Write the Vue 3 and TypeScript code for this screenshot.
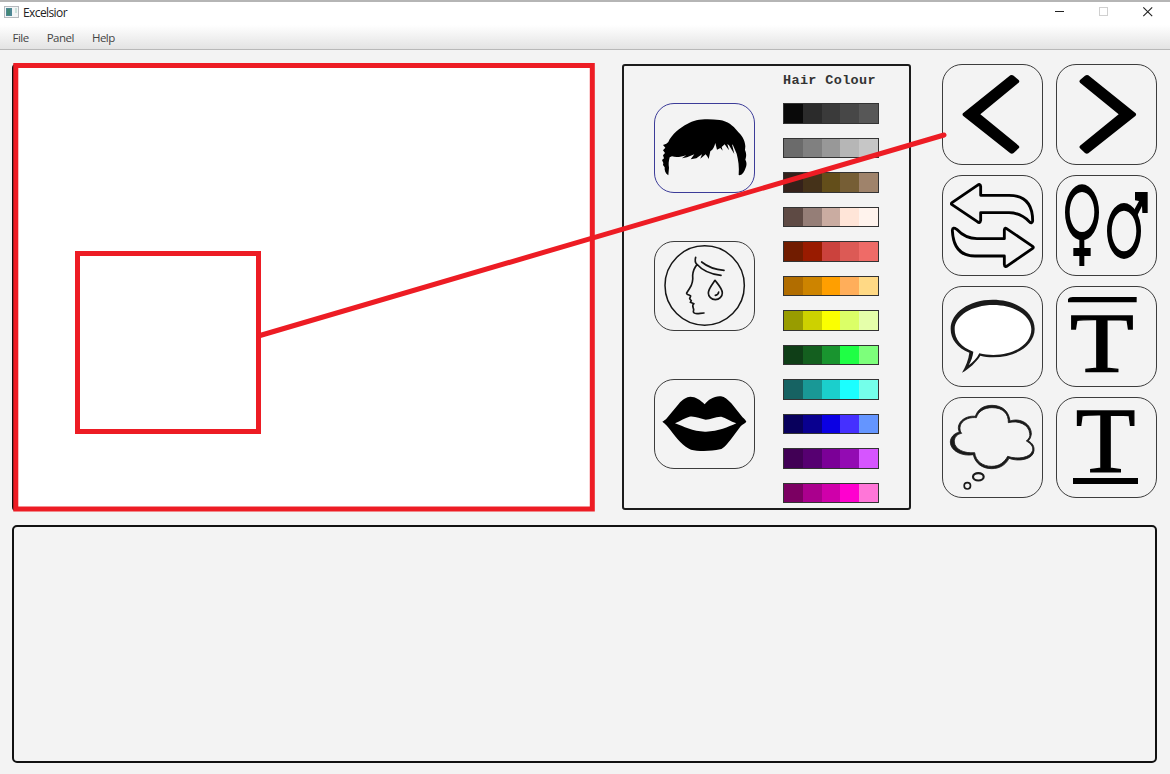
<script setup lang="ts">
interface Tool { id: string; box: string }

const menus: string[] = ['File', 'Panel', 'Help']

const features: Tool[] = [
  { id: 'hair', box: '27 24 303 270' },
  { id: 'skin', box: '27 18 303 270' },
  { id: 'lips', box: '27 21 303 270' },
]

const tools: Tool[] = [
  { id: 'prev', box: '21 27 303 303' },
  { id: 'next', box: '363 27 303 303' },
  { id: 'swap', box: '21 15 303 303' },
  { id: 'gender', box: '363 15 303 303' },
  { id: 'speech', box: '21 18 303 303' },
  { id: 'top-text', box: '363 18 303 303' },
  { id: 'thought', box: '21 21 303 303' },
  { id: 'bottom-text', box: '363 21 303 303' },
]

const palette: string[][] = [
  ['#090909', '#2b2b2b', '#3a3a3a', '#474747', '#575757'],
  ['#6b6b6b', '#808080', '#989898', '#b6b6b6', '#c6c6c6'],
  ['#35211a', '#453219', '#634e1a', '#765e35', '#9f836b'],
  ['#5e4a44', '#957e77', '#caaca1', '#ffe5d8', '#fff3ed'],
  ['#711c00', '#991b00', '#cb423d', '#dc5a55', '#ef6b67'],
  ['#b16d00', '#cd8400', '#ff9f00', '#ffae5a', '#ffd985'],
  ['#989c00', '#cdd100', '#fbff00', '#dbff67', '#e5ffaa'],
  ['#0f3e17', '#145f1f', '#19942f', '#1fff45', '#7dff7b'],
  ['#166262', '#199896', '#1bcfcc', '#1bffff', '#74ffea'],
  ['#08005c', '#09008f', '#0b00e3', '#4530ff', '#6495ff'],
  ['#410055', '#560071', '#7b0097', '#930bb3', '#d655ff'],
  ['#7b0062', '#aa008d', '#cf00aa', '#ff00cf', '#ff76d8'],
]
</script>

<template>
  <div class="window">
    <header class="titlebar">
      <svg class="app-icon" viewBox="0 0 15 12">
        <rect x=".5" y=".5" width="14" height="11" fill="#f3f5f6" stroke="#b5b9bd" />
        <rect x="2" y="2" width="6" height="8" fill="#4d8794" />
        <rect x="3" y="3" width="3" height="6" fill="#438875" />
        <rect x="11" y="2" width="2" height="5" fill="#cbe2dc" />
      </svg>
      <span class="title">Excelsior</span>
      <div class="controls">
        <svg viewBox="0 0 12 12"><path d="M1 5.500H10" stroke="#222" /></svg>
        <svg viewBox="0 0 12 12"><rect x="1.5" y="1.5" width="8" height="8" fill="none" stroke="#d0d0d0" /></svg>
        <svg viewBox="0 0 12 12"><path d="M1.3 1.3 10.2 10.2M10.2 1.3 1.3 10.2" stroke="#222" stroke-width="1.1" /></svg>
      </div>
    </header>
    <nav class="menubar">
      <span v-for="menu in menus" :key="menu">{{ menu }}</span>
    </nav>

    <main class="workspace">
      <div class="upper">
        <section class="canvas"></section>

        <section class="character">
          <div class="features">
            <button v-for="item in features" :key="item.id" class="tile" :class="{ selected: item.id === 'hair' }">
              <svg :viewBox="item.box">
                <path v-if="item.id === 'hair'" d="M70 241C61 236 58 226 59 217L54 210 55 204 51 195 57 190 54 181 60 174 54 166 61 158 54 150 64 146 70 141C79 119 105 97 128 86C149 72 186 70 224 75C248 79 264 91 277 108C290 121 300 134 301 154L300 165C305 178 304 184 301 194C307 204 304 214 302 218C298 230 293 239 284 241L281 240C283 216 280 195 275 176L264 151 261 148 268 177 252 151 247 147 252 166 239 148 230 156 233 167 226 159 216 164 211 144C208 154 205 164 196 169L191 192C188 185 185 183 182 178L166 191 171 178 154 190 137 193 148 178 126 187 111 190 124 180C107 187 92 188 81 184L74 187C71 199 70 207 72 218Z" />
                <g v-else-if="item.id === 'skin'" fill="none" stroke="#161616" stroke-width="5" stroke-linecap="round" stroke-linejoin="round">
                  <circle cx="179" cy="151.500" r="119" stroke-width="4.500" />
                  <path d="M152 67C149 77 150 83 156 89C148 98 144 109 143 121C145 140 140 151 134 160L125 174Q124 178 132 180L137 183 134 191 139 197 136 202 147 206C139 211 145 216 146 224C143 233 147 236 156 236C164 236 168 234 177 234M155 87C174 109 198 118 228 121M170 81C192 99 211 104 237 106M210 136C202 148 190 162 190 174A21 20 0 0 0 232 174C232 161 220 149 210 136ZM221 171Q220 180 211 181" />
                </g>
                <path v-else fill-rule="evenodd" d="M52 149C57 146 62 143 66 138L101 96C112 81 125 75 136 74C151 74 167 84 179 97C190 83 208 71 228 73C239 74 248 83 259 94L289 131C293 137 301 141 304 149C300 154 292 157 287 163L259 200C246 216 237 229 225 232C198 238 158 238 138 233C115 224 94 198 76 174C69 164 61 155 52 149ZM90 154C107 147 120 137 133 134C149 131 165 140 182 143C197 142 212 133 229 134C242 137 257 149 274 154C249 165 221 178 183 179C145 180 116 163 90 154Z" />
              </svg>
            </button>
          </div>
          <div class="colours">
            <h2>Hair Colour</h2>
            <div class="rows">
              <div v-for="(row, i) in palette" :key="i" class="swatches">
                <i v-for="colour in row" :key="colour" :style="{ background: colour }"></i>
              </div>
            </div>
          </div>
        </section>

        <section class="tools">
          <button v-for="tool in tools" :key="tool.id" class="tile">
            <svg :viewBox="tool.box">
              <path v-if="tool.id === 'prev'" d="M84 175 226 61Q231 59 236 62L251 75Q255 79 251 83L136 178 251 272Q255 276 251 280L236 294Q231 298 226 295L84 182Q81 178 84 175Z" />
              <path v-else-if="tool.id === 'next'" d="M602 175 460 61Q455 59 450 62L435 75Q431 79 435 83L551 178 435 272Q431 276 435 280L450 294Q455 298 460 295L602 182Q605 178 602 175Z" />
              <g v-else-if="tool.id === 'swap'" fill="none" stroke="#000" stroke-width="8.500" stroke-linejoin="round">
                <path d="M51 98 127 46Q136 40 137 49V76H222C267 76 293 100 293 153Q291 163 283 155C268 140 249 128 222 128H137V151Q135 162 127 155L51 104Q47 101 51 98Z" />
                <path d="M293 229 218 178Q209 170 208 180V206H126C98 206 80 194 65 178Q53 170 52 181C54 225 70 258 120 258H208V283Q209 294 218 287L293 235Q297 232 293 229Z" />
              </g>
              <g v-else-if="tool.id === 'gender'">
                <path fill-rule="evenodd" d="M390 127A51 84 0 1 0 492 127A51 84 0 1 0 390 127ZM404 126A37 60 0 1 1 478 126A37 60 0 1 1 404 126Z" />
                <path d="M433 207H448V234H467V258H448V288H433V258H415V234H433Z" />
                <path fill-rule="evenodd" d="M516 183A51 84 0 1 0 618 183A51 84 0 1 0 516 183ZM530 183A37 61 0 1 1 604 183A37 61 0 1 1 530 183Z" />
                <path d="M596 122 612 93 600 91V66H638V129H622L621 108 606 138Z" />
              </g>
              <g v-else-if="tool.id === 'speech'" fill="#1a1a1a">
                <path d="M173 59C245 59 299 98 299 147C299 194 246 232 174 232C160 232 148 231 136 227C124 246 103 266 81 278C92 259 101 238 103 218C67 204 47 177 47 147C47 97 103 59 173 59Z" />
                <path fill="#fff" d="M175 75C239 75 289 107 289 148C289 191 240 225 175 225C160 225 147 224 133 220C125 236 114 246 101 256C109 243 113 229 115 215C78 203 59 177 59 148C59 107 111 75 175 75Z" />
              </g>
              <g v-else-if="tool.id === 'top-text'">
                <path d="M399 57Q403 51 413 51H605V67H399Z" />
                <text class="serif-t" transform="translate(405 277) scale(1.220 1)" font-size="257">T</text>
              </g>
              <g v-else-if="tool.id === 'thought'" fill="#1a1a1a" stroke="#1a1a1a" stroke-width="2.500" fill-rule="evenodd">
                <path d="M121 79C128 57 147 46 171 46C203 46 222 65 225 93C257 82 290 103 289 133Q288 144 280 153C294 160 298 170 297 182C295 209 250 216 222 205C211 226 193 236 170 236C141 236 120 219 115 194C82 200 46 183 46 156C46 143 57 130 73 126C61 102 87 75 121 79ZM124 83C94 80 67 99 77 126L80 130C66 132 57 143 58 156C59 178 88 191 119 188C122 213 143 229 170 229C193 229 208 217 218 199C247 209 287 204 293 181C295 169 287 160 274 153C283 145 286 139 284 130C282 104 250 90 220 98C221 72 205 53 171 53C148 53 130 64 124 83Z" />
                <ellipse cx="130" cy="260.500" rx="16" ry="11" fill="none" stroke-width="6.500" />
                <circle cx="97" cy="287.500" r="9.500" fill="none" stroke-width="5" />
              </g>
              <g v-else>
                <path d="M414 264H609V282H414Z" />
                <text class="serif-t" transform="translate(422 247) scale(1.050 1)" font-size="279">T</text>
              </g>
            </svg>
          </button>
        </section>
      </div>
      <section class="timeline"></section>
    </main>

    <svg class="annotation" viewBox="0 0 1170 774">
      <rect x="15.800" y="65.500" width="576.500" height="443.500" />
      <rect x="77.500" y="253.500" width="181" height="178" />
      <path d="M260 335.500 944 135" />
    </svg>
  </div>
</template>

<style>
body { margin: 0; overflow: hidden; }
</style>

<style scoped>
.window {
  position: relative;
  box-sizing: border-box;
  width: 1170px;
  height: 774px;
  background: #f3f3f3;
  font-family: "Open Sans", "Noto Sans", sans-serif;
  display: flex;
  flex-direction: column;
}
.titlebar {
  box-sizing: border-box;
  height: 25px;
  border-top: 2px solid #b5b5b5;
  background: #fff;
  display: flex;
  align-items: center;
  padding: 0 16px 3px 4px;
}
.app-icon { width: 15px; height: 12px; }
.title { margin-left: 4px; font-size: 12px; letter-spacing: -0.600px; color: #222; line-height: 18px; padding-top: 1px; }
.controls { margin-left: auto; display: flex; gap: 32px; }
.controls svg { width: 12px; height: 12px; }
.menubar {
  box-sizing: border-box;
  height: 25px;
  border-bottom: 1px solid #b8b8b8;
  background: linear-gradient(#fff, #e3e3e3);
  display: flex;
  gap: 18px;
  padding-left: 12.500px;
  font-size: 11.500px;
  letter-spacing: -0.500px;
  line-height: 25px;
  color: #444;
}
.workspace { padding: 14px 13px 0 12px; }
.upper { display: flex; height: 447px; }
.canvas { box-sizing: border-box; width: 582px; border: 2px solid #111; border-radius: 4px; background: #fff; }
.character {
  box-sizing: border-box;
  width: 289px;
  height: 446px;
  margin-left: 28px;
  border: 2px solid #1b1b1b;
  border-radius: 3px;
  display: flex;
}
.features { display: flex; flex-direction: column; gap: 48px; padding: 37px 0 0 30px; }
.tile {
  box-sizing: border-box;
  display: block;
  width: 101px;
  height: 101px;
  border: 1px solid #3c3c3c;
  border-radius: 20px;
  padding: 0;
  background: transparent;
}
.tile svg { display: block; width: 101px; height: 101px; margin: -1px; overflow: visible; }
.features .tile, .features .tile svg { height: 90px; }
.tile.selected { border-color: #3b3b98; }
.serif-t { font-family: "Liberation Serif", serif; stroke: #000; stroke-width: 4px; }
.colours { padding: 6px 0 0 28px; }
h2 { margin: 0; font: bold 13.500px/17px "Liberation Mono", monospace; letter-spacing: 0.350px; color: #333; white-space: nowrap; }
.rows { display: flex; flex-direction: column; gap: 14px; padding-top: 14px; }
.swatches { box-sizing: border-box; width: 96px; height: 20.500px; border: 1px solid #333; display: flex; }
.swatches i { flex: 1; }
.tools { margin-left: 31px; display: grid; grid-template-columns: 101px 101px; gap: 10px 13px; align-content: start; }
.timeline { box-sizing: border-box; height: 238px; margin-top: 14px; border: 2px solid #111; border-radius: 5px; }
.annotation { position: absolute; inset: 0; width: 1170px; height: 774px; pointer-events: none; }
.annotation rect, .annotation path { fill: none; stroke: #ed1c24; stroke-width: 5px; stroke-linecap: round; }
</style>
